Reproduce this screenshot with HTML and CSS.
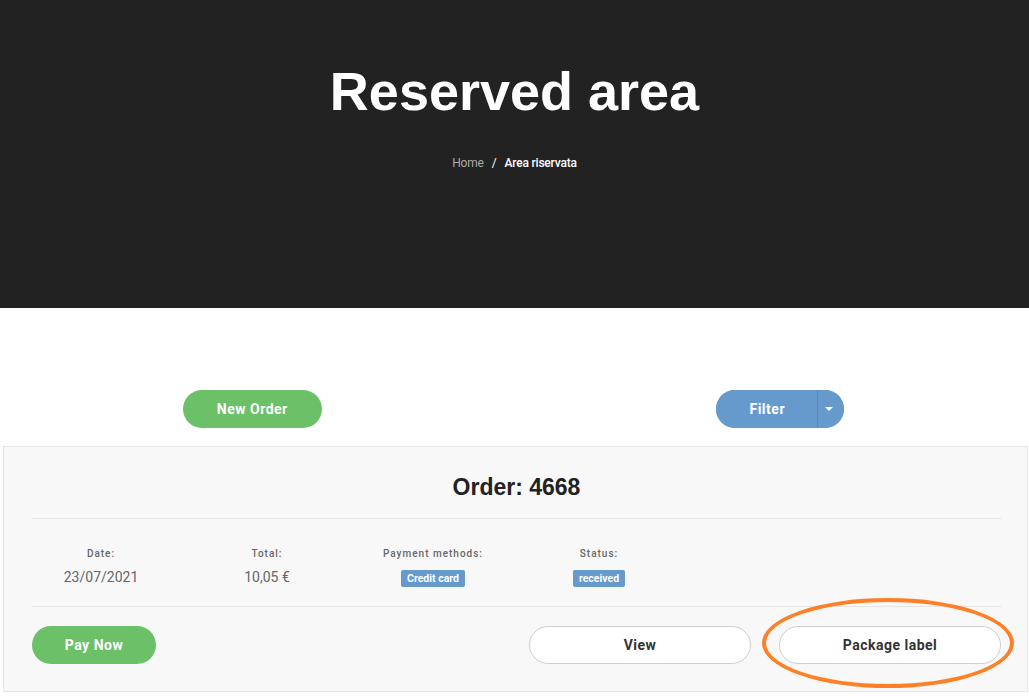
FILE: index.html
```html
<!DOCTYPE html>
<html>
<head>
<meta charset="utf-8">
<link rel="stylesheet" href="styles.css">
</head>
<body>
<header class="hero">
  <h1 class="hero-title">Reserved area</h1>
  <nav class="crumbs"><span class="crumb-home">Home</span><span class="crumb-sep">/</span><span class="crumb-current">Area riservata</span></nav>
</header>
<main class="content">
  <div class="toolbar">
    <div class="toolbar-cell"><button class="btn btn-green btn-new">New Order</button></div>
    <div class="toolbar-cell">
      <div class="split">
        <button class="split-main">Filter</button>
        <button class="split-caret"><span class="caret"></span></button>
      </div>
    </div>
  </div>
  <section class="card">
    <h2 class="card-title">Order: 4668</h2>
    <div class="info">
      <div class="info-row">
        <div class="info-col"><div class="info-label">Date:</div><div class="info-value">23/07/2021</div></div>
        <div class="info-col"><div class="info-label">Total:</div><div class="info-value">10,05 €</div></div>
        <div class="info-col"><div class="info-label">Payment methods:</div><div class="info-value"><span class="badge">Credit card</span></div></div>
        <div class="info-col"><div class="info-label">Status:</div><div class="info-value"><span class="badge">received</span></div></div>
      </div>
    </div>
    <div class="actions">
      <button class="btn btn-green btn-pay">Pay Now</button>
      <div class="actions-right">
        <button class="btn btn-white">View</button>
        <div class="highlight-wrap">
          <button class="btn btn-white">Package label</button>
          <span class="highlight"></span>
        </div>
      </div>
    </div>
  </section>
</main>
</body>
</html>
```
FILE: styles.css
```css
* { box-sizing: border-box; }
html, body { margin: 0; padding: 0; background: #fff; }
body { font-family: Roboto, "Liberation Sans", Arial, sans-serif; color: #333; }

.hero {
  background: #222222;
  height: 308px;
  display: flex;
  flex-direction: column;
  align-items: center;
  padding-top: 60px;
}
.hero-title {
  margin: 0;
  font-family: "Liberation Sans", Arial, sans-serif;
  font-weight: bold;
  font-size: 54px;
  line-height: 62px;
  color: #fff;
}
.crumbs {
  margin-top: 34px;
  font-size: 12px;
  line-height: 14px;
  display: flex;
  gap: 8px;
  letter-spacing: -0.2px;
}
.crumb-home { color: #aaa; }
.crumb-sep { color: #fff; }
.crumb-current { color: #fff; font-weight: 500; }

.content {
  padding: 82px 1px 0 3px;
}
.toolbar {
  display: grid;
  grid-template-columns: 1fr 1fr;
  padding: 0 0 18px 0;
}
.toolbar-cell { display: flex; justify-content: center; }
.toolbar-cell:first-child { padding-right: 14px; }
.toolbar-cell:last-child { padding-left: 16px; }

.btn {
  font-family: Roboto, sans-serif;
  font-weight: bold;
  font-size: 14px;
  letter-spacing: 0.5px;
  height: 38px;
  border-radius: 19px;
  border: none;
  padding: 0;
  cursor: pointer;
}
.btn-green { background: #6cc068; color: #fff; }
.btn-new { width: 139px; }
.btn-pay { width: 124px; }
.btn-white {
  background: #fff;
  color: #333;
  border: 1px solid #cfcfcf;
  width: 222px;
}

.split {
  display: flex;
  height: 38px;
  border-radius: 19px;
  overflow: hidden;
  background: #6699cc;
}
.split-main, .split-caret {
  background: #6699cc;
  color: #fff;
  border: none;
  font-family: Roboto, sans-serif;
  font-weight: bold;
  font-size: 14px;
  letter-spacing: 0.5px;
  padding: 0;
}
.split-main { width: 102px; padding-left: 2px; border-right: 1px solid #5a8abd; }
.split-caret { width: 26px; display: flex; align-items: center; justify-content: center; padding-right: 3px; }
.caret {
  width: 0; height: 0;
  border-left: 4px solid transparent;
  border-right: 4px solid transparent;
  border-top: 4px solid #fff;
}

.card {
  background: #f8f8f8;
  border: 1px solid #e6e6e6;
  height: 246px;
  padding: 0 26px 0 28px;
}
.card-title {
  margin: 0;
  text-align: center;
  font-family: "Liberation Sans", Arial, sans-serif;
  font-weight: bold;
  font-size: 23px;
  line-height: 26px;
  color: #222;
  padding: 27px 0 18px;
  border-bottom: 1px solid #e4e4e4;
}
.info {
  padding: 29px 0 20px;
  border-bottom: 1px solid #e4e4e4;
}
.info-row {
  display: flex;
  margin-left: -14px;
}
.info-col {
  width: 166px;
  display: flex;
  flex-direction: column;
  align-items: center;
}
.info-label {
  font-size: 10px;
  line-height: 12px;
  font-weight: 500;
  color: #666;
  letter-spacing: 1px;
}
.info-value {
  margin-top: 8px;
  font-size: 14px;
  line-height: 18px;
  color: #666;
  height: 18px;
  display: flex;
  align-items: center;
}
.badge {
  background: #6699cc;
  color: #fff;
  font-size: 10.5px;
  font-weight: bold;
  line-height: 13px;
  padding: 2px 6px;
  border-radius: 2px;
  margin-top: 3px;
}

.actions {
  display: flex;
  justify-content: space-between;
  align-items: center;
  padding-top: 19px;
}
.actions-right { display: flex; gap: 28px; }
.highlight-wrap { position: relative; }
.highlight {
  position: absolute;
  left: -17px;
  top: -28px;
  width: 252px;
  height: 90px;
  border: 4px solid #ff7f27;
  border-radius: 50%;
  pointer-events: none;
}
```
